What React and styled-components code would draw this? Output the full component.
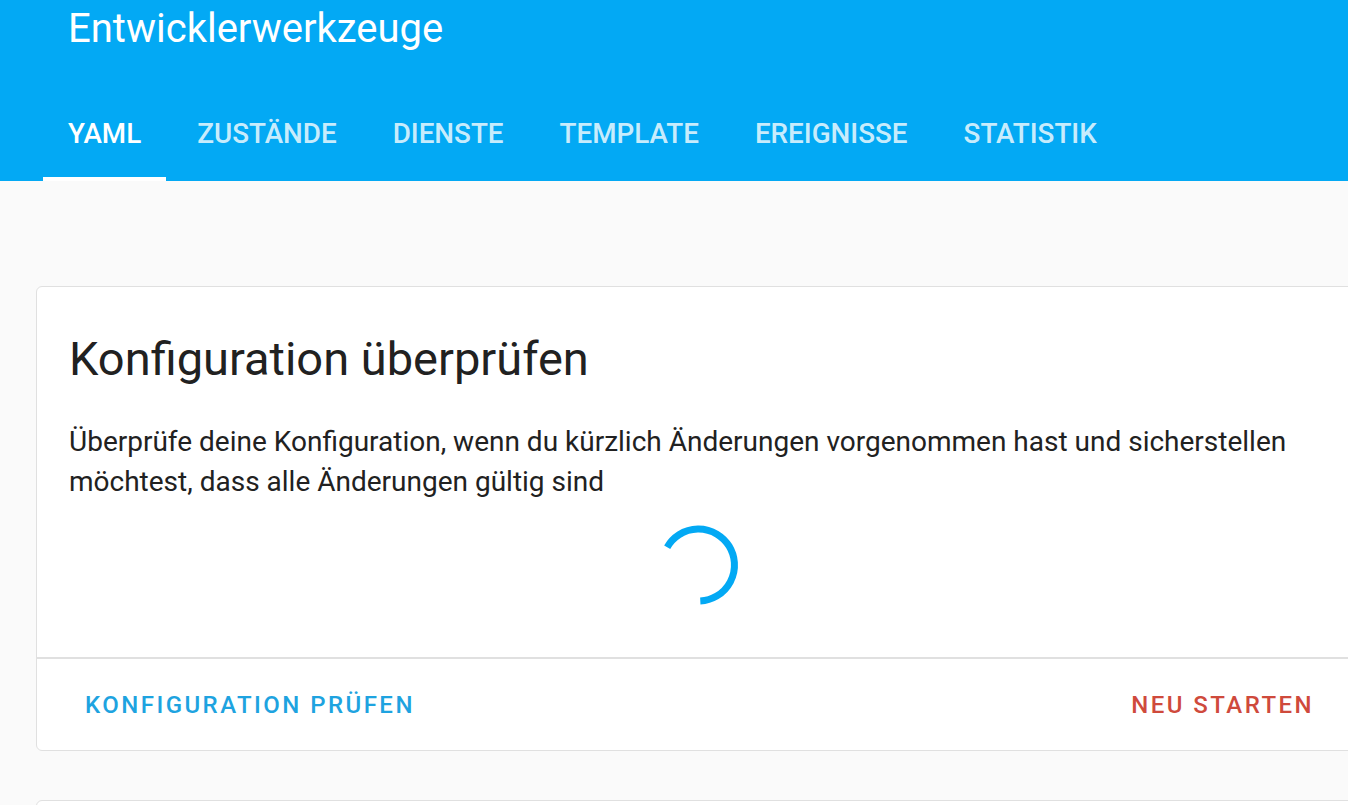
import React from "react";
import styled, { createGlobalStyle } from "styled-components";

const GlobalStyle = createGlobalStyle`
    html, body {
        margin: 0;
        padding: 0;
        background: #fafafa;
        overflow: hidden;
        font-family: Roboto, "Noto Sans", sans-serif;
    }
`;

const tabs = ["YAML", "ZUSTÄNDE", "DIENSTE", "TEMPLATE", "EREIGNISSE", "STATISTIK"];

const Page = styled.div`
    width: 1348px;
    height: 805px;
    overflow: hidden;
    background: #fafafa;
`;

const Header = styled.header`
    background: #03a9f4;
    color: #fff;
`;

const Toolbar = styled.div`
    height: 85px;
    display: flex;
    align-items: flex-start;
    padding-left: 68px;
`;

const Title = styled.h1`
    margin: 0;
    margin-top: 3px;
    font-size: 40px;
    font-weight: 400;
    line-height: 52px;
`;

const TabBar = styled.nav`
    display: flex;
    gap: 6px;
    padding-left: 43px;
    height: 96px;
`;

const Tab = styled.div`
    position: relative;
    display: flex;
    align-items: center;
    padding: 0 25px;
    font-size: 27.8px;
    font-weight: 500;
    color: ${p => (p.$active ? "#fff" : "rgba(255, 255, 255, 0.8)")};

    &::after {
        content: "";
        position: absolute;
        left: 0;
        right: 0;
        bottom: 0;
        height: 4px;
        background: ${p => (p.$active ? "#fff" : "transparent")};
    }
`;

const Content = styled.main`
    padding: 105px 0 0 36px;
    display: flex;
    flex-direction: column;
    gap: 49px;
`;

const Card = styled.section`
    width: 1325px;
    min-height: ${p => p.$minHeight || 0}px;
    background: #fff;
    border: 1px solid #e0e0e0;
    border-radius: 6px;
    box-sizing: border-box;
    color: #212121;
`;

const CardTitle = styled.h2`
    margin: 0;
    padding: 44px 32px 0;
    font-size: 47px;
    font-weight: 400;
    line-height: 56px;
`;

const CardText = styled.p`
    margin: 0;
    padding: 35px 32px 0;
    font-size: 28px;
    line-height: 40px;
    max-width: 1230px;
`;

const SpinnerBox = styled.div`
    display: flex;
    justify-content: center;
    padding: 21px 0 50px;
`;

const Footer = styled.div`
    border-top: 2px solid #e0e0e0;
    height: 91px;
    display: flex;
    align-items: center;
    justify-content: space-between;
    padding: 0 30px 0 32px;
`;

const Button = styled.button`
    background: none;
    border: none;
    padding: 0 16px;
    font-family: Roboto, sans-serif;
    font-size: 24px;
    font-weight: 500;
    letter-spacing: 2.45px;
    color: ${p => (p.$danger ? "#cf4a3c" : "#1ea3e0")};
`;

const Spinner = () => (
    <svg width="84" height="84" viewBox="0 0 84 84">
        <path
            d="M 10.2 24.2 A 36 36 0 1 1 43.3 78"
            fill="none"
            stroke="#03a9f4"
            strokeWidth="7"
        />
    </svg>
);

export default function App() {
    return (
        <Page>
            <GlobalStyle />
            <Header>
                <Toolbar>
                    <Title>Entwicklerwerkzeuge</Title>
                </Toolbar>
                <TabBar>
                    {tabs.map((t, i) => (
                        <Tab key={t} $active={i === 0}>{t}</Tab>
                    ))}
                </TabBar>
            </Header>
            <Content>
                <Card>
                    <CardTitle>Konfiguration überprüfen</CardTitle>
                    <CardText>
                        Überprüfe deine Konfiguration, wenn du kürzlich Änderungen vorgenommen hast und sicherstellen möchtest, dass alle Änderungen gültig sind
                    </CardText>
                    <SpinnerBox>
                        <Spinner />
                    </SpinnerBox>
                    <Footer>
                        <Button>KONFIGURATION PRÜFEN</Button>
                        <Button $danger>NEU STARTEN</Button>
                    </Footer>
                </Card>
                <Card $minHeight={200} />
            </Content>
        </Page>
    );
}
